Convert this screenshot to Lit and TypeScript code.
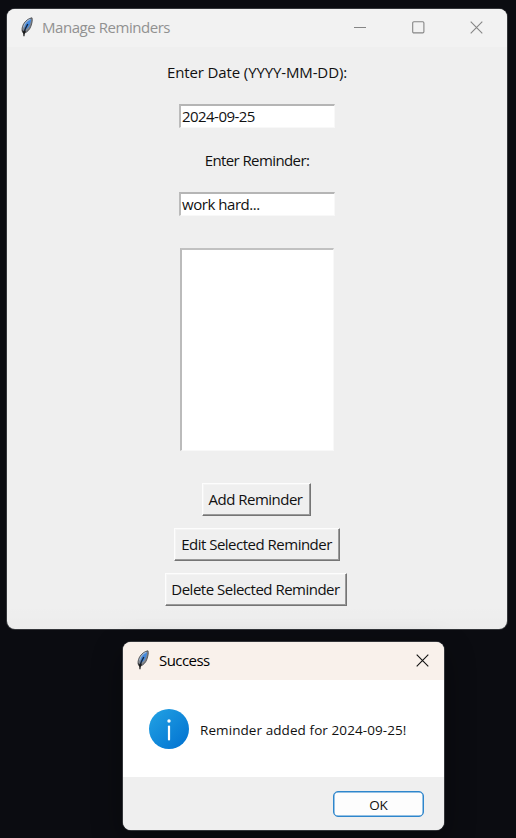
import { LitElement, html, css, svg } from "lit";
import { customElement } from "lit/decorators.js";

const feather = html`<svg class="feather" width="14" height="20" viewBox="0 0 14 20">
  <path d="M12 .8C8.500 1.300 5.300 4 3.500 7.200C2.100 10 1.300 13.300 2.800 15.600L4.200 16.300C7 15.200 9.800 12.600 10.900 9.200C11.900 6.300 12.700 3.200 12 .8Z" fill="#85898f" stroke="#4a4d52" stroke-width=".9"/>
  <path d="M11 2C8 2.700 5.800 5.600 4.600 8.800L4.600 13C7.800 11.500 9.400 9.300 10.200 6.500C10.800 4.700 11.300 3.400 11 2Z" fill="#4489de"/>
  <path d="M10.300 2.300C7.200 3.500 4.600 6.300 3.500 10.300" fill="none" stroke="#9db8d6" stroke-width="1.100"/>
  <path d="M7.800 7L5.600 11.200L4.200 14.500" fill="none" stroke="#14253d" stroke-width="1.400"/>
  <path d="M2.100 12.800L3.600 14.300L6.200 13.500L4.800 16.500L4.500 19.300H3.400L3.200 16.500Z" fill="#1b1b1b"/>
</svg>`;
const close = svg`<path d="M.7.7L12.300 12.300M12.300.7L.7 12.300"/>`;

@customElement("app-root")
export class AppRoot extends LitElement {
  static styles = css`
    :host { display: flex; flex-direction: column; box-sizing: border-box; width: 516px; height: 838px;
      padding: 9px 9px 8px 7px; overflow: hidden; background: #0b0c11; color: #111;
      font: 15px/20px "Open Sans", "Noto Sans", sans-serif; white-space: nowrap; }
    * { box-sizing: border-box; }
    svg { display: block; flex: none; }
    .window { width: 500px; height: 620px; border-radius: 8px; background: #efefef; overflow: hidden;
      box-shadow: 0 0 0 1px #34363a; flex: none; }
    .bar { display: flex; align-items: center; height: 38px; background: #f2f2f2; color: #919191; }
    .feather { margin-left: 13px; margin-top: -2px; }
    .title { flex: 1; margin: -2px 0 0 8px; letter-spacing: -.45px; }
    .dialog .title { margin-left: 9px; letter-spacing: -.55px; color: #000; }
    .ctl { fill: none; stroke: #858585; stroke-width: 1.100; margin-top: -1px; }
    .min, .max { margin-right: 45px; }
    .close { margin-right: 24px; }
    .form { display: flex; flex-direction: column; align-items: center; height: 582px; padding-top: 16px;
      background: linear-gradient(#0000 558px, #00000003); }
    .label { height: 20px; line-height: 18px; letter-spacing: -.6px; }
    .date-label { letter-spacing: -.12px; }
    .entry { width: 156px; height: 24px; margin: 21px 0 23px; padding: 0 0 0 1px; background: #fff; letter-spacing: -.55px;
      border: solid; border-width: 2px 1px 1px 2px; border-color: #b5b5b5 #f8f8f8 #f8f8f8 #bbb; }
    .work { letter-spacing: -.4px; }
    .list { width: 154px; height: 203px; margin: 9px 0 32px; background: #fff;
      border: solid; border-width: 2px 1px 1px 2px; border-color: #c1c1c1 #f8f8f8 #f8f8f8 #bbb; }
    .btn { display: flex; justify-content: center; height: 33px; margin-bottom: 12px; padding-right: 1px; background: #efefef; line-height: 30px; letter-spacing: -.5px;
      border: solid; border-width: 1px; border-color: #fdfdfd #757575 #757575 #fdfdfd;
      box-shadow: inset -1px -1px #9a9a9a, inset 1px 1px #f4f4f4; }
    .add { width: 109px; margin-right: 2px; } .edit { width: 166px; } .del { width: 182px; margin-right: 2px; }
    .work { letter-spacing: -.45px; }
    .dialog { width: 321px; height: 188px; margin: 13px 0 0 116px; border-radius: 8px; background: #fff;
      overflow: hidden; box-shadow: 0 0 0 1px #34363a, 0 10px 30px 2px #0005; flex: none; }
    .dialog .bar { background: #f9f1eb; color: #111; }
    .dialog .ctl { stroke: #111; }
    .dialog .close { margin-right: 15px; }
    .message { display: flex; align-items: center; height: 97px; padding-left: 26px; gap: 11px; }
    .message span { font-size: 13.500px; margin-top: 2px; letter-spacing: .08px; }
    .foot { display: flex; justify-content: flex-end; height: 53px; padding: 14px 20px 0 0; background: #efefef; }
    .ok { width: 91px; height: 26px; border: 1px solid #2e86cc; box-shadow: inset 0 0 0 .5px #2e86cc; border-radius: 5px; background: #fdfdfd;
      text-align: center; font-size: 13.500px; line-height: 26px; letter-spacing: -.2px; }
  `;

  render() {
    return html`
      <section class="window">
        <header class="bar">${feather}<span class="title">Manage Reminders</span>
          <svg class="ctl min" width="13" height="13"><path d="M0 6.500H12"/></svg>
          <svg class="ctl max" width="13" height="13"><rect x=".7" y=".7" width="11.200" height="11.200" rx="1.200"/></svg>
          <svg class="ctl close" width="13" height="13">${close}</svg>
        </header>
        <div class="form">
          <div class="label date-label">Enter Date (YYYY-MM-DD):</div>
          <div class="entry">2024-09-25</div>
          <div class="label">Enter Reminder:</div>
          <div class="entry work">work hard...</div>
          <div class="list"></div>
          <div class="btn add">Add Reminder</div>
          <div class="btn edit">Edit Selected Reminder</div>
          <div class="btn del">Delete Selected Reminder</div>
        </div>
      </section>
      <section class="dialog">
        <header class="bar">${feather}<span class="title">Success</span>
          <svg class="ctl close" width="13" height="13">${close}</svg>
        </header>
        <div class="message">
          <svg width="40" height="40" viewBox="0 0 40 40">
            <defs><linearGradient id="g" x1="0" y1="0" x2="1" y2="1"><stop stop-color="#23a3e4"/><stop offset="1" stop-color="#0070d0"/></linearGradient></defs>
            <circle cx="20" cy="20" r="20" fill="url(#g)"/>
            <circle cx="20" cy="12" r="1.700" fill="#fff"/>
            <path d="M20 17.500V30.500" stroke="#fff" stroke-width="2.200" stroke-linecap="round"/>
          </svg>
          <span>Reminder added for 2024-09-25!</span>
        </div>
        <footer class="foot"><div class="ok">OK</div></footer>
      </section>`;
  }
}
